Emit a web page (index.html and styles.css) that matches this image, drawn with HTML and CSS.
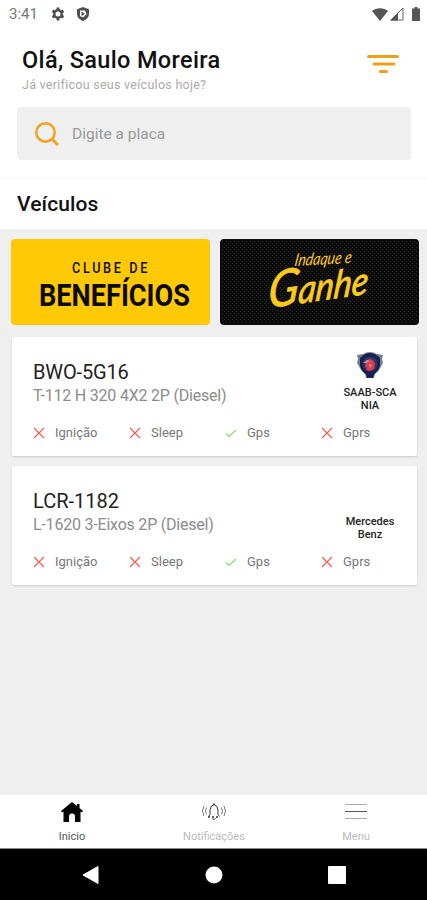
FILE: index.html
```html
<!DOCTYPE html>
<html lang="pt-BR">
<head>
    <meta charset="UTF-8">
    <meta name="viewport" content="width=device-width, initial-scale=1.0">
    <title>Veículos</title>
    <link rel="stylesheet" href="styles.css">
</head>
<body>
    <div class="app">
        <div class="statusbar">
            <span class="clock">3:41</span>
            <svg class="gear" width="14" height="14" viewBox="0 0 14 14">
                <circle cx="7" cy="7" r="3.7" fill="none" stroke="#505050" stroke-width="2.4"/>
                <path d="M7 .6v2.4M7 11v2.4M1.5 3.8l2 1.2M10.500 9l2 1.200M1.500 10.200l2-1.200M10.500 5l2-1.200" stroke="#505050" stroke-width="2.800"/>
            </svg>
            <svg class="shield" width="12" height="14" viewBox="0 0 12 14">
                <path d="M6 0l6 2.300v4.500c0 3.500-2.500 6-6 7.200-3.500-1.200-6-3.700-6-7.200V2.300z" fill="#505050"/>
                <path d="M3 3.500h5l1.500 3.500-3.200 3.200-3.300-1z" fill="#fff"/>
                <path d="M4.500 4.600l3.500 2.200-3.500 2.200z" fill="#505050"/>
            </svg>
            <div class="signals">
                <svg width="16" height="13" viewBox="0 0 16 13"><path d="M0 3C4.500-.8 11.500-.8 16 3L8 13z" fill="#555"/></svg>
                <svg width="14" height="14" viewBox="0 0 14 14">
                    <path d="M1 13L13 1v12z" fill="#fff" stroke="#666"/>
                    <path d="M0 13.500L8 5.500v8z" fill="#555"/>
                </svg>
                <svg class="battery" width="8" height="14" viewBox="0 0 8 14"><path d="M2.500 0h3v1.500H8V14H0V1.500h2.500z" fill="#555"/></svg>
            </div>
        </div>

        <header class="header">
            <div>
                <h1>Olá, Saulo Moreira</h1>
                <p>Já verificou seus veículos hoje?</p>
            </div>
            <svg class="filter" width="34" height="20" viewBox="0 0 34 20">
                <path d="M2.500 2.500h29M8 10h20M14.500 17.500h6" stroke="#efa116" stroke-width="3" stroke-linecap="round"/>
            </svg>
        </header>

        <div class="search">
            <svg width="24" height="24" viewBox="0 0 24 24">
                <circle cx="10.500" cy="10.500" r="9.200" fill="none" stroke="#f4a11d" stroke-width="2.500"/>
                <path d="M17 17l6 6" stroke="#f4a11d" stroke-width="2.800"/>
            </svg>
            <span>Digite a placa</span>
        </div>

        <h2 class="section-title">Veículos</h2>

        <main class="content">
            <div class="banners">
                <svg class="banner club" viewBox="0 0 199 86">
                    <g transform="translate(61 34) scale(.82 1)">
                        <text textLength="92">CLUBE DE</text>
                    </g>
                    <text class="big" x="28" y="66.500" textLength="151" lengthAdjust="spacingAndGlyphs">BENEFÍCIOS</text>
                </svg>
                <svg class="banner refer" viewBox="0 0 199 86">
                    <defs>
                        <pattern id="mesh" width="4" height="4" patternUnits="userSpaceOnUse">
                            <path d="M0 0h1v1H0zM2 2h1v1H2z" fill="#242424"/>
                        </pattern>
                    </defs>
                    <rect x="2" y="2" width="195" height="82" fill="url(#mesh)"/>
                    <g transform="translate(74 27) rotate(-3) skewX(-12)">
                        <text textLength="57" lengthAdjust="spacingAndGlyphs">Indaque e</text>
                    </g>
                    <g transform="translate(47 69) rotate(-8) skewX(-14)">
                        <text class="big" textLength="101" lengthAdjust="spacingAndGlyphs"><tspan class="cap">G</tspan>anhe</text>
                    </g>
                </svg>
            </div>

            <div class="card">
                <div class="vehicle">
                    <div class="info">
                        <h3 class="plate plate-bwo">BWO-5G16</h3>
                        <p class="model">T-112 H 320 4X2 2P (Diesel)</p>
                    </div>
                    <div class="brand">
                        <svg width="28" height="27" viewBox="0 0 28 27">
                            <path d="M1 3l6-1Q14-2 21 2l6 1-1 4 1 4-4 7-4 4-1 4h-8l-1-4-4-4-4-7 1-4z" fill="#777d8d"/>
                            <path d="M4 6Q14-4 24 6v8q-2 6-6 8l-1 4h-6l-1-4q-4-2-6-8z" fill="#17204f"/>
                            <circle cx="14" cy="12" r="7.500" fill="#26366f"/>
                            <path d="M9 15l1-5 3-3 4 1 2 4-1 5-4 2-4-1 1-2z" fill="#e63c43"/>
                            <path d="M7 11l4-3 3 1-4 2zM13 12l3 1-2 3" fill="#b3a2b6"/>
                        </svg>
                        <span>SAAB-SCA<br>NIA</span>
                    </div>
                </div>
                <ul class="sensors">
                    <li><svg class="off" viewBox="0 0 12 12"><path d="M1 1l10 10M11 1L1 11"/></svg>Ignição</li>
                    <li><svg class="off" viewBox="0 0 12 12"><path d="M1 1l10 10M11 1L1 11"/></svg>Sleep</li>
                    <li><svg class="on" viewBox="0 0 12 12"><path d="M1 6.500l3 3L11 3"/></svg>Gps</li>
                    <li><svg class="off" viewBox="0 0 12 12"><path d="M1 1l10 10M11 1L1 11"/></svg>Gprs</li>
                </ul>
            </div>

            <div class="card">
                <div class="vehicle">
                    <div class="info">
                        <h3 class="plate">LCR-1182</h3>
                        <p class="model model-lcr">L-1620 3-Eixos 2P (Diesel)</p>
                    </div>
                    <div class="brand brand-mb">
                        <span>Mercedes<br>Benz</span>
                    </div>
                </div>
                <ul class="sensors">
                    <li><svg class="off" viewBox="0 0 12 12"><path d="M1 1l10 10M11 1L1 11"/></svg>Ignição</li>
                    <li><svg class="off" viewBox="0 0 12 12"><path d="M1 1l10 10M11 1L1 11"/></svg>Sleep</li>
                    <li><svg class="on" viewBox="0 0 12 12"><path d="M1 6.500l3 3L11 3"/></svg>Gps</li>
                    <li><svg class="off" viewBox="0 0 12 12"><path d="M1 1l10 10M11 1L1 11"/></svg>Gprs</li>
                </ul>
            </div>
        </main>

        <nav class="tabs">
            <div class="tab active">
                <svg width="22" height="20" viewBox="0 0 22 20">
                    <path d="M11 0l5 4V2h2.500v4L22 9l-1 1.500-1.500-1V20H14v-5.500a3 3 0 0 0-6 0V20H2.500V9.500l-1.500 1L0 9z"/>
                </svg>
                <span>Inicio</span>
            </div>
            <div class="tab">
                <svg width="24" height="20" viewBox="0 0 24 20" fill="none" stroke="#333">
                    <path d="M6.500 14.500l1.500-2V8q0-4 4-5.500Q16 4 16 8v4.500l1.500 2"/>
                    <path d="M6 15h12" stroke-width="1.500" stroke-dasharray="2 2"/>
                    <path d="M10.500 16.500q1.500 2 3 0M12 1v2"/>
                    <path d="M4.500 5.500q-2 3.500 0 7M2 4q-3 5 0 10M19.500 5.500q2 3.500 0 7M22 4q3 5 0 10" stroke="#777"/>
                </svg>
                <span>Notificações</span>
            </div>
            <div class="tab">
                <svg width="24" height="20" viewBox="0 0 24 20">
                    <path d="M1 2.500h22M1 16.500h22" stroke="#aaa"/>
                    <path d="M1 9.500h22" stroke="#555"/>
                </svg>
                <span>Menu</span>
            </div>
        </nav>

        <div class="navbar">
            <svg width="18" height="20" viewBox="0 0 18 20"><path d="M1 10L16 1.500v17z" fill="#fff" stroke="#fff" stroke-linejoin="round"/></svg>
            <svg width="18" height="18" viewBox="0 0 18 18"><circle cx="9" cy="9" r="8.500" fill="#fff"/></svg>
            <svg width="18" height="18" viewBox="0 0 18 18"><rect width="18" height="18" rx="1" fill="#fff"/></svg>
        </div>
    </div>
</body>
</html>
```
FILE: styles.css
```css
* {
    box-sizing: border-box;
}

body {
    margin: 0;
    font-family: Roboto, "Liberation Sans", sans-serif;
    background: #fff;
}

h1, h2, h3, p, ul {
    margin: 0;
    padding: 0;
    font-weight: 400;
}

svg {
    display: block;
    flex-shrink: 0;
}

.app {
    height: 900px;
    display: flex;
    flex-direction: column;
    overflow: hidden;
}

.statusbar {
    height: 28px;
    display: flex;
    align-items: center;
    padding: 0 7px 0 9px;
    color: #777;
    font-size: 15px;
}

.clock {
    width: 42px;
}

.shield {
    margin-left: 12px;
}

.signals {
    display: flex;
    align-items: center;
    margin-left: auto;
    gap: 2px;
}

.battery {
    margin-left: 6px;
}

.header {
    height: 79px;
    display: flex;
    justify-content: space-between;
    padding: 18px 27px 0 22px;
}

.header h1 {
    font-size: 23.5px;
    line-height: 29px;
    font-weight: 500;
    letter-spacing: 0.35px;
    color: #111;
}

.header p {
    font-size: 12.5px;
    line-height: 19px;
    letter-spacing: 0.27px;
    color: #aaa;
}

.filter {
    margin-top: 8px;
}

.search {
    height: 53px;
    margin: 0 16px 0 17px;
    padding: 1px 18px 0;
    display: flex;
    align-items: center;
    gap: 13px;
    background: #efefef;
    border-radius: 4px;
    font-size: 15.5px;
    color: #999;
}

.section-title {
    height: 51px;
    margin-top: 18px;
    padding-left: 17px;
    border-top: 1px solid #f8f8f8;
    font-size: 21px;
    line-height: 50px;
    font-weight: 500;
    letter-spacing: 0.1px;
    color: #111;
}

.content {
    flex: 1;
    background: #efefef;
    padding: 10px 8px 0 11px;
}

.banners {
    display: flex;
    gap: 10px;
    margin-bottom: 12px;
}

.banner {
    width: 199px;
    height: 86px;
    border-radius: 4px;
}

.club {
    background: #ffca05;
    fill: #0d0b00;
    font-size: 15.5px;
    font-weight: 500;
}

.club .big {
    font-size: 31px;
    font-weight: 700;
}

.refer {
    background: #0c0c0c;
}

.refer text {
    fill: #fccb1b;
    font-family: Lato, sans-serif;
    font-style: italic;
    font-size: 17px;
}

.refer .big {
    font-size: 38px;
    stroke: #fccb1b;
    stroke-width: 0.8px;
}

.refer .cap {
    font-size: 50px;
}

.card {
    height: 119px;
    margin: 0 2px 10px 1px;
    padding: 15px 12px 0 21px;
    background: #fff;
    border-radius: 2px;
    box-shadow: 0 1px 2px rgba(0, 0, 0, 0.15);
}

.vehicle {
    height: 72px;
    display: flex;
    justify-content: space-between;
}

.plate {
    margin-top: 7px;
    font-size: 20px;
    line-height: 26px;
    color: #222;
}

.plate-bwo {
    letter-spacing: -0.15px;
}

.model {
    font-size: 16px;
    line-height: 22px;
    letter-spacing: -0.21px;
    color: #8c8c8c;
}

.brand {
    width: 70px;
    display: flex;
    flex-direction: column;
    align-items: center;
    text-align: center;
    font-size: 11px;
    line-height: 13px;
    font-weight: 500;
    color: #222;
}

.brand span {
    margin-top: 7px;
}

.brand-mb span {
    margin-top: 34px;
}

.sensors {
    display: grid;
    grid-template-columns: repeat(4, 96px);
    list-style: none;
    font-size: 13px;
    line-height: 17px;
    color: #777;
}

.sensors li {
    display: flex;
    align-items: center;
    gap: 10px;
}

.sensors svg {
    width: 12px;
    height: 12px;
    fill: none;
    stroke-width: 1.2px;
}

.off {
    stroke: #f45b55;
}

.on {
    stroke: #8bdd72;
}

.tabs {
    height: 54px;
    display: grid;
    grid-template-columns: repeat(3, 1fr);
    padding-left: 1px;
    border-bottom: 1px solid #888;
}

.tab {
    display: flex;
    flex-direction: column;
    align-items: center;
    padding-top: 7px;
    font-size: 11px;
    line-height: 13px;
    color: #bbb;
}

.tab span {
    margin-top: 8px;
}

.active {
    color: #555;
}

.navbar {
    height: 51px;
    display: flex;
    justify-content: space-between;
    align-items: center;
    padding: 0 81px 0 82px;
    background: #000;
}
```
